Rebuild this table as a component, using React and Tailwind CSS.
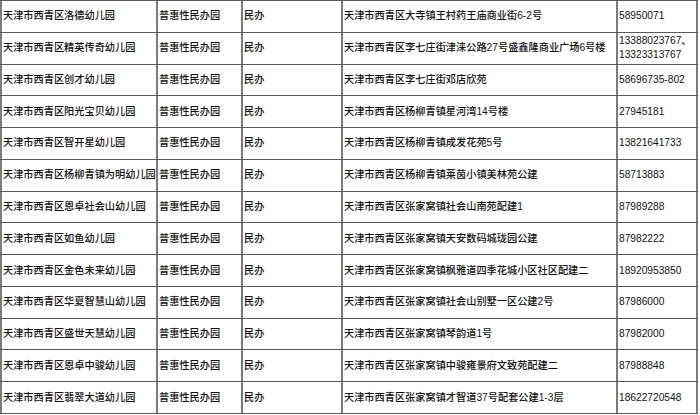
const rows = [
  ["天津市西青区洛德幼儿园", "天津市西青区大寺镇王村药王庙商业街6-2号", ["58950071"]],
  ["天津市西青区精英传奇幼儿园", "天津市西青区李七庄街津涞公路27号盛鑫隆商业广场6号楼", ["13388023767、", "13323313767"]],
  ["天津市西青区创才幼儿园", "天津市西青区李七庄街邓店欣苑", ["58696735-802"]],
  ["天津市西青区阳光宝贝幼儿园", "天津市西青区杨柳青镇星河湾14号楼", ["27945181"]],
  ["天津市西青区智开星幼儿园", "天津市西青区杨柳青镇成发花苑5号", ["13821641733"]],
  ["天津市西青区杨柳青镇为明幼儿园", "天津市西青区杨柳青镇莱茵小镇美林苑公建", ["58713883"]],
  ["天津市西青区恩卓社会山幼儿园", "天津市西青区张家窝镇社会山南苑配建1", ["87989288"]],
  ["天津市西青区如鱼幼儿园", "天津市西青区张家窝镇天安数码城珑园公建", ["87982222"]],
  ["天津市西青区金色未来幼儿园", "天津市西青区张家窝镇枫雅道四季花城小区社区配建二", ["18920953850"]],
  ["天津市西青区华夏智慧山幼儿园", "天津市西青区张家窝镇社会山别墅一区公建2号", ["87986000"]],
  ["天津市西青区盛世天慧幼儿园", "天津市西青区张家窝镇琴韵道1号", ["87982000"]],
  ["天津市西青区恩卓中骏幼儿园", "天津市西青区张家窝镇中骏雍景府文致苑配建二", ["87988848"]],
  ["天津市西青区翡翠大道幼儿园", "天津市西青区张家窝镇才智道37号配套公建1-3层", ["18622720548"]],
];

const cell = "flex flex-col justify-center pl-[1px] border-l-2 border-[#7c7c7c] overflow-hidden whitespace-nowrap";

export default function App() {
  return (
    <div
      className="w-[700px] h-[415px] overflow-hidden bg-white text-[10.2px] leading-[14px] text-[#111] font-medium"
      style={{ fontFamily: '"Liberation Sans", "Noto Sans CJK SC", sans-serif' }}
    >
      <div className="w-[698px] border-b border-[#5a5a5a]">
        {rows.map(([name, addr, phones], i) => (
          <div
            key={i}
            className="grid grid-cols-[156px_85px_100px_275px_82px] h-[31.77px] border-t border-[#5a5a5a]"
          >
            <div className={cell}>{name}</div>
            <div className={cell}>普惠性民办园</div>
            <div className={cell}>民办</div>
            <div className={cell}>{addr}</div>
            <div className={cell + " border-r-2"}>
              {phones.map((p) => (
                <span key={p}>{p}</span>
              ))}
            </div>
          </div>
        ))}
      </div>
    </div>
  );
}
